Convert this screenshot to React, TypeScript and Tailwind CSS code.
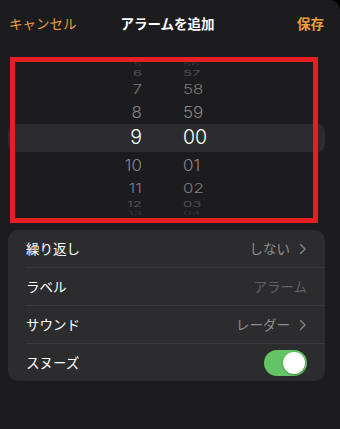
import React from "react";

const JP = { fontFamily: '"Noto Sans CJK JP", "Noto Sans", sans-serif' };
const NUM = { fontFamily: 'Inter, "Noto Sans", sans-serif' };

// Wheel rows, top to bottom. h = row height, size = font px, sy = vertical squash.
const ROWS = [
  { hour: "5", min: "56", h: 8, size: 14, sy: 0.35, color: "#3c3c3f" },
  { hour: "6", min: "57", h: 10, size: 15, sy: 0.5, color: "#5c5c60" },
  { hour: "7", min: "58", h: 22, size: 17, sy: 0.78, color: "#7c7c80" },
  { hour: "8", min: "59", h: 24, size: 17, sy: 0.92, color: "#86868a" },
  { hour: "9", min: "00", h: 28, size: 19.5, sy: 1, color: "#ffffff", sel: true },
  { hour: "10", min: "01", h: 26, size: 17, sy: 0.92, color: "#86868a" },
  { hour: "11", min: "02", h: 20, size: 17, sy: 0.78, color: "#7c7c80" },
  { hour: "12", min: "03", h: 12, size: 15, sy: 0.5, color: "#5c5c60" },
  { hour: "13", min: "04", h: 6, size: 14, sy: 0.35, color: "#3c3c3f" },
];

function Chevron() {
  return (
    <svg width="8" height="12" viewBox="0 0 8 12" className="ml-[9px]">
      <path d="M1.5 1.5 L6 6 L1.5 10.5" fill="none" stroke="#7d7d82" strokeWidth="1.5" strokeLinecap="round" strokeLinejoin="round" />
    </svg>
  );
}

function Row({ label, children, first }: { label: string; children: React.ReactNode; first?: boolean }) {
  return (
    <div className={`flex items-center pl-[18px] ${first ? "h-[37px]" : "h-[38px]"}`}>
      <div className={`flex h-full flex-1 items-center pr-[18px] ${first ? "" : "border-t border-[#3a3a3d]"}`}>
        <span className="text-[13.5px] text-white">{label}</span>
        <div className="ml-auto flex items-center">{children}</div>
      </div>
    </div>
  );
}

export default function App() {
  return (
    <div className="relative h-[429px] w-[340px] overflow-hidden bg-black" style={JP}>
      <div className="h-full w-full rounded-tr-[10px] bg-[#1c1c1e]">
        {/* Header */}
        <div className="flex h-[46px] items-center pl-[9px] pr-[16px] text-[13.5px]">
          <span className="text-[#e99f3e]">キャンセル</span>
          <span className="ml-[44px] font-bold text-white">アラームを追加</span>
          <span className="ml-auto font-bold text-[#e99f3e]">保存</span>
        </div>

        {/* Time wheel */}
        <div className="mx-[8px] mt-[14px] flex h-[156px] w-[317px] flex-col overflow-hidden font-light" style={NUM}>
          {ROWS.map((r, i) => (
            <div
              key={i}
              className={`flex shrink-0 items-center overflow-hidden ${r.sel ? "rounded-[8px] bg-[#2c2c2f]" : ""}`}
              style={{ height: r.h }}
            >
              <div className="w-[134px] text-right leading-none" style={{ color: r.color, fontSize: r.size, transform: `scaleY(${r.sy})` }}>
                {r.hour}
              </div>
              <div className="ml-[41px] leading-none" style={{ color: r.color, fontSize: r.size, transform: `scaleY(${r.sy})` }}>
                {r.min}
              </div>
            </div>
          ))}
        </div>

        {/* Settings list */}
        <div className="mx-[8px] mt-[14px] w-[317px] overflow-hidden rounded-[10px] bg-[#2c2c2e]">
          <Row label="繰り返し" first>
            <span className="text-[13.5px] text-[#8d8d92]">しない</span>
            <Chevron />
          </Row>
          <Row label="ラベル">
            <span className="text-[13.5px] text-[#626266]">アラーム</span>
          </Row>
          <Row label="サウンド">
            <span className="text-[13.5px] text-[#8d8d92]">レーダー</span>
            <Chevron />
          </Row>
          <Row label="スヌーズ">
            <div className="flex h-[26px] w-[43px] items-center justify-end rounded-full bg-[#63c466] pr-[2px]">
              <div className="h-[22px] w-[22px] rounded-full bg-white shadow-[0_1px_2px_rgba(0,0,0,0.3)]" />
            </div>
          </Row>
        </div>
      </div>

      {/* red annotation frame */}
      <div className="absolute left-[10px] top-[57px] h-[166px] w-[308px] border-[5px] border-[#e81e26]" />
    </div>
  );
}
